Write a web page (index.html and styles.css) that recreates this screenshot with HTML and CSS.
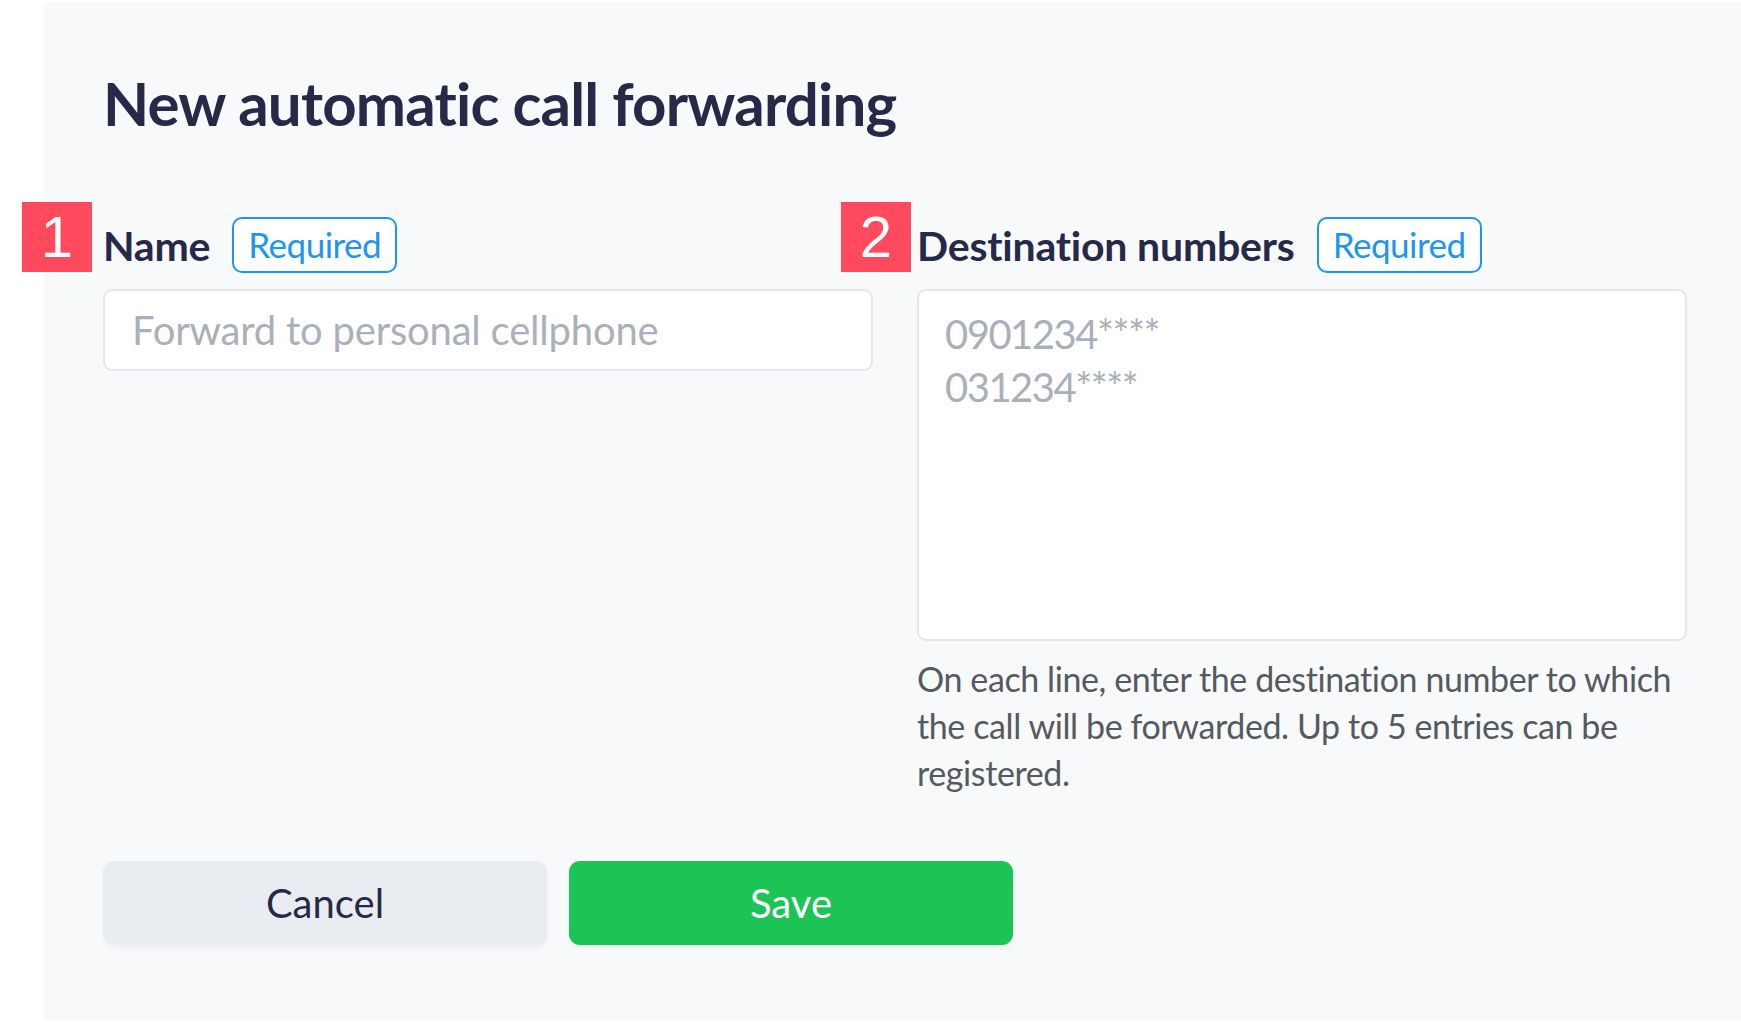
FILE: index.html
```html
<!DOCTYPE html>
<html lang="en">
<head>
<meta charset="utf-8">
<title>New automatic call forwarding</title>
<link rel="stylesheet" href="styles.css">
</head>
<body>
<div class="panel">
  <h1 class="title">New automatic call forwarding</h1>
  <div class="fields">
    <div class="field">
      <div class="label-row">
        <span class="marker">1</span>
        <span class="label">Name</span>
        <span class="req">Required</span>
      </div>
      <input class="input" type="text" placeholder="Forward to personal cellphone">
    </div>
    <div class="field">
      <div class="label-row">
        <span class="marker marker-right">2</span>
        <span class="label">Destination numbers</span>
        <span class="req">Required</span>
      </div>
      <textarea class="textarea" placeholder="0901234****&#10;031234****"></textarea>
      <p class="help">On each line, enter the destination number to which the call will be forwarded. Up to 5 entries can be registered.</p>
    </div>
  </div>
  <div class="actions">
    <button class="btn cancel" type="button">Cancel</button>
    <button class="btn save" type="button">Save</button>
  </div>
</div>
</body>
</html>
```
FILE: styles.css
```css
* { box-sizing: border-box; }
html, body {
  margin: 0;
  padding: 0;
  background: #ffffff;
  font-family: "Lato", "Noto Sans", sans-serif;
}
.panel {
  margin: 2px 0 0 44px;
  height: 1018px;
  background: #f8f9fb;
  padding: 61px 54px 0 59px;
}
.title {
  margin: 0;
  font-size: 60px;
  line-height: 80px;
  font-weight: 700;
  letter-spacing: -0.8px;
  color: #262a48;
}
.fields {
  display: grid;
  grid-template-columns: 770px 770px;
  column-gap: 44px;
  margin-top: 74px;
}
.field {
  display: flex;
  flex-direction: column;
}
.label-row {
  position: relative;
  display: flex;
  align-items: center;
  gap: 22px;
  height: 56px;
}
.marker {
  position: absolute;
  left: -81px;
  top: -15px;
  width: 70px;
  height: 70px;
  background: #ff4a5e;
  color: #ffffff;
  font-family: "Liberation Sans", sans-serif;
  font-size: 58px;
  line-height: 70px;
  text-align: center;
}
.marker-right {
  left: -76px;
}
.label {
  font-size: 41px;
  font-weight: 700;
  letter-spacing: -0.2px;
  color: #262a48;
}
.req {
  height: 56px;
  padding: 0 14px;
  border: 2.5px solid #1e96f0;
  border-radius: 10px;
  color: #1e96f0;
  font-size: 35px;
  letter-spacing: -0.5px;
  line-height: 50px;
  background: #ffffff;
}
.input, .textarea {
  display: block;
  width: 100%;
  margin-top: 16px;
  border: 2px solid #e4e7eb;
  border-radius: 9px;
  background: #ffffff;
  font-family: inherit;
  color: #262a48;
  outline: none;
}
.input {
  height: 82px;
  padding: 0 27px;
  font-size: 40px;
  letter-spacing: -0.2px;
}
.textarea {
  height: 352px;
  padding: 17px 26px;
  font-size: 40px;
  letter-spacing: -1.5px;
  line-height: 53px;
  resize: none;
}
.input::placeholder, .textarea::placeholder {
  color: #a9b0ba;
}
.help {
  margin: 14px 0 0;
  font-size: 34px;
  letter-spacing: -0.4px;
  line-height: 47px;
  color: #555960;
}
.actions {
  display: flex;
  gap: 22px;
  margin-top: 65px;
}
.btn {
  width: 444px;
  height: 84px;
  border: none;
  border-radius: 11px;
  font-family: inherit;
  font-size: 40px;
  box-shadow: 0 4px 4px rgba(0, 0, 0, 0.03);
}
.cancel {
  background: #e9edf2;
  color: #262a48;
}
.save {
  background: #1bc454;
  color: #ffffff;
}
```
